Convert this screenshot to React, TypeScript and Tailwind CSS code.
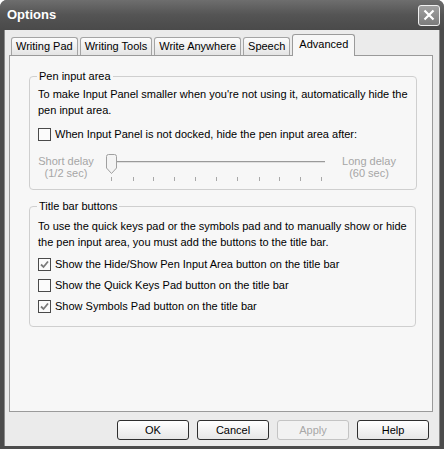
import React from 'react';

const font = { fontFamily: '"Liberation Sans", Arial, sans-serif' };

const tabs = ['Writing Pad', 'Writing Tools', 'Write Anywhere', 'Speech', 'Advanced'];

// XP style check box
const CheckBox = ({ checked }: { checked?: boolean }) => (
  <div className="w-[13px] h-[13px] border border-[#4a4a4a] bg-[#fbfbfb] flex items-center justify-center shrink-0">
    {checked && (
      <svg width="9" height="9" viewBox="0 0 9 9">
        <path d="M1 4.5 L3.5 7 L8 1.5" fill="none" stroke="#7a7a7a" strokeWidth="1.8" />
      </svg>
    )}
  </div>
);

const CheckRow = ({ label, checked }: { label: string; checked?: boolean }) => (
  <div className="flex items-center gap-[4px] h-[21px]">
    <CheckBox checked={checked} />
    <span>{label}</span>
  </div>
);

const Slider = () => {
  const ticks = [5, 27, 47, 68, 89, 110, 131, 153, 173, 194, 215];
  return (
    <svg width="222" height="30" viewBox="0 0 222 30" className="shrink-0">
      <line x1="5" y1="7.5" x2="219" y2="7.5" stroke="#9a9a9a" strokeWidth="1" />
      <line x1="5" y1="8.5" x2="219" y2="8.5" stroke="#e0e0e0" strokeWidth="1" />
      {ticks.map((x) => (
        <line key={x} x1={x + 0.5} y1="23" x2={x + 0.5} y2="27" stroke="#a8a8a8" strokeWidth="1" />
      ))}
      <path d="M0.5 2.5 Q0.5 0.5 2.5 0.5 L8.5 0.5 Q10.5 0.5 10.5 2.5 L10.5 14 L5.5 19.5 L0.5 14 Z" fill="#f4f4f4" stroke="#a0a0a0" />
    </svg>
  );
};

const App = () => {
  return (
    <div style={font} className="w-[444px] h-[449px] bg-[#4c4c4c] rounded-t-[7px] flex flex-col overflow-hidden text-[11px] text-black">
      {/* title bar */}
      <div className="h-[30px] shrink-0 flex items-center justify-between pl-[7px] pr-[4px] bg-gradient-to-b from-[#6e6e6e] via-[#545454] to-[#4a4a4a]">
        <span className="text-white font-bold text-[13px]">Options</span>
        <div className="w-[22px] h-[21px] rounded-[3px] border border-[#f0f0f0] bg-gradient-to-b from-[#a0a0a0] to-[#7c7c7c] flex items-center justify-center">
          <svg width="12" height="12" viewBox="0 0 12 12">
            <path d="M1.5 1.5 L10.5 10.5 M10.5 1.5 L1.5 10.5" stroke="#ffffff" strokeWidth="2.2" />
          </svg>
        </div>
      </div>

      {/* body */}
      <div className="flex-1 mx-[4px] mb-[3px] bg-[#ebebeb] flex flex-col pt-[4px] pl-[4px] pr-[6px] border-l border-r border-[#8a8a8a]">
        {/* tab strip */}
        <div className="flex items-end h-[21px] pl-[2px]">
          {tabs.map((t) => {
            const active = t === 'Advanced';
            return (
              <div
                key={t}
                className={
                  active
                    ? 'h-[22px] -mb-[1px] px-[6px] bg-[#f7f7f7] border border-b-0 border-[#9a9a9a] rounded-t-[3px] flex items-center z-10 relative pb-[2px]'
                    : 'h-[18px] mr-[2px] px-[4px] bg-gradient-to-b from-[#fcfcfc] to-[#e4e4e4] border border-b-0 border-[#a4a4a4] rounded-t-[3px] flex items-center'
                }
              >
                {t}
              </div>
            );
          })}
        </div>

        {/* tab panel */}
        <div className="h-[357px] bg-[#f7f7f7] border border-[#9a9a9a] pt-[13px] pl-[19px] pr-[17px]">
          <fieldset className="border border-[#cfcfcf] rounded-[4px] px-[8px] h-[121px] whitespace-nowrap">
            <legend className="px-[2px] ml-[-1px] leading-[14px]">Pen input area</legend>
            <p className="leading-[15.5px] mt-[4px]">
              To make Input Panel smaller when you're not using it, automatically hide the
              <br />
              pen input area.
            </p>
            <div className="mt-[6px]">
              <CheckRow label="When Input Panel is not docked, hide the pen input area after:" />
            </div>
            <div className="flex items-start mt-[9px] text-[#a6a6a6]">
              <div className="w-[56px] flex flex-col items-center leading-[12px] mt-[1px]">
                <span>Short delay</span>
                <span>(1/2 sec)</span>
              </div>
              <div className="ml-[12px]">
                <Slider />
              </div>
              <div className="ml-[13px] w-[56px] flex flex-col items-center leading-[12px] mt-[1px]">
                <span>Long delay</span>
                <span>(60 sec)</span>
              </div>
            </div>
          </fieldset>

          <fieldset className="border border-[#cfcfcf] rounded-[4px] px-[8px] h-[128px] mt-[9px] whitespace-nowrap">
            <legend className="px-[2px] ml-[-1px] leading-[14px]">Title bar buttons</legend>
            <p className="leading-[15.5px] mt-[6px]">
              To use the quick keys pad or the symbols pad and to manually show or hide
              <br />
              the pen input area, you must add the buttons to the title bar.
            </p>
            <div className="mt-[4px] flex flex-col">
              <CheckRow label="Show the Hide/Show Pen Input Area button on the title bar" checked />
              <CheckRow label="Show the Quick Keys Pad button on the title bar" />
              <CheckRow label="Show Symbols Pad button on the title bar" checked />
            </div>
          </fieldset>
        </div>

        {/* buttons */}
        <div className="flex justify-end gap-[8px] mt-[8px] pr-[4px]">
          {['OK', 'Cancel', 'Apply', 'Help'].map((b) => (
            <div
              key={b}
              className={
                b === 'Apply'
                  ? 'w-[72px] h-[20px] rounded-[3px] border border-[#c4c4c4] bg-[#f2f2f2] text-[#a8a8a8] flex items-center justify-center'
                  : 'w-[72px] h-[20px] rounded-[3px] border border-[#2e2e2e] bg-gradient-to-b from-[#ffffff] to-[#e6e6e6] flex items-center justify-center'
              }
            >
              {b}
            </div>
          ))}
        </div>
      </div>
    </div>
  );
};

export default App;
